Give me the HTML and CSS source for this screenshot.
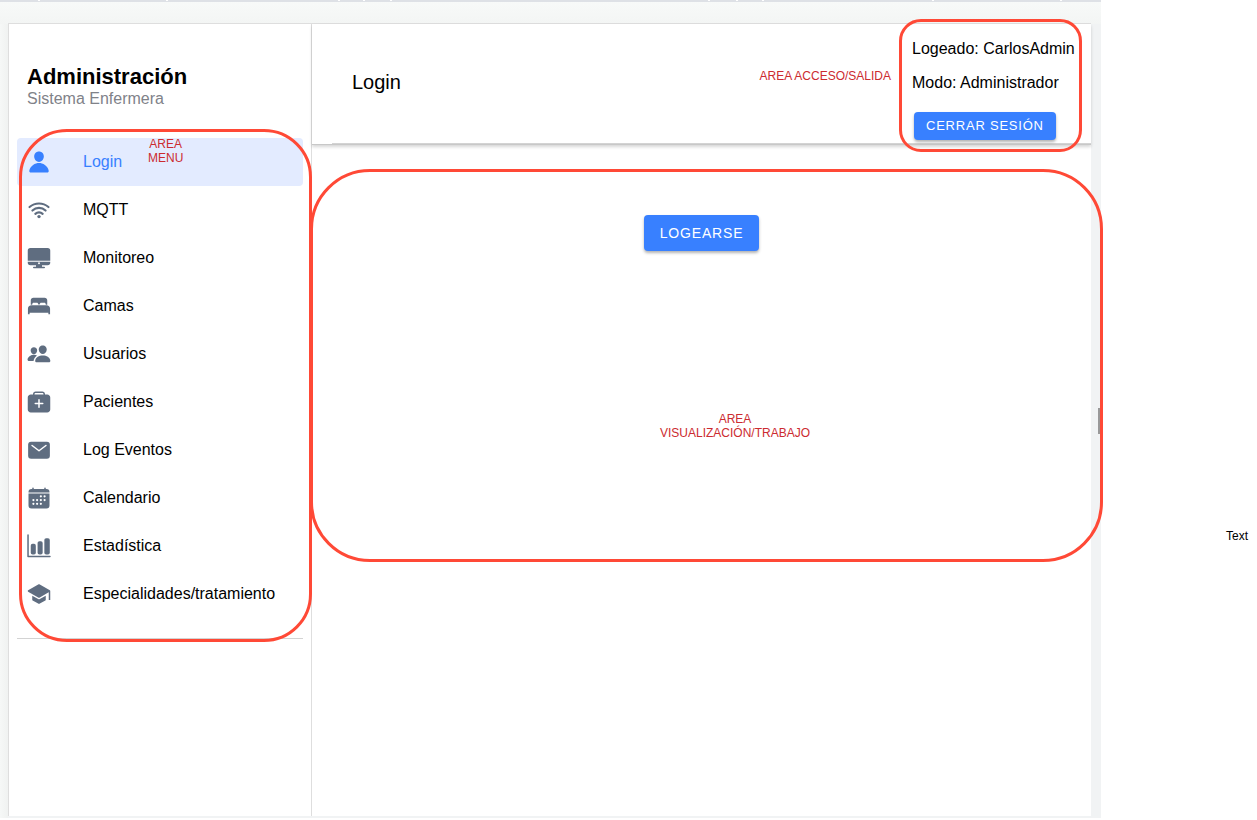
FILE: index.html
```html
<!DOCTYPE html>
<html lang="es">
<head>
<meta charset="utf-8">
<title>Administración - Sistema Enfermera</title>
<link rel="stylesheet" href="styles.css">
</head>
<body>
<div class="viewer">
  <div class="topbar"><i></i><i></i><i></i><i></i><i></i><i></i><i></i><i></i><i></i><i></i><i></i></div>
  <div class="frame">
    <aside class="sidebar">
      <header class="brand">
        <h1 class="brand-title">Administración</h1>
        <p class="brand-note">Sistema Enfermera</p>
      </header>
      <nav class="menu">
        <a class="item active" href="#"><svg class="icon" viewBox="0 0 512 512"><path d="M332 64c-19-21-46-32-76-32s-57 11-76 32-29 50-27 81c4 61 51 111 103 111s98-50 103-111c2-31-8-59-27-81zM432 480H80a31 31 0 0 1-24-11c-7-8-9-18-7-29 9-50 37-92 81-121 39-26 88-40 126-40s87 14 126 40c44 29 72 71 81 121 2 11 0 21-7 29a31 31 0 0 1-24 11z"/></svg>Login</a>
        <a class="item" href="#"><svg class="icon" viewBox="0 0 512 512"><g fill="none" stroke="currentColor" stroke-width="46" stroke-linecap="round"><path d="M54 193q88-76 202-76t202 76M116 268q60-56 140-56t140 56M178 338q34-32 78-32t78 32"/></g><circle cx="256" cy="397" r="36"/></svg>MQTT</a>
        <a class="item" href="#"><svg class="icon" viewBox="0 0 512 512"><path d="M16 336v16a56 56 0 0 0 56 56h120v32h-48a16 16 0 0 0 0 32h224a16 16 0 0 0 0-32h-48v-32h120a56 56 0 0 0 56-56v-16H16zm240 52a20 20 0 1 1 0-40 20 20 0 0 1 0 40zM496 312V96a56 56 0 0 0-56-56H72a56 56 0 0 0-56 56v216z"/></svg>Monitoreo</a>
        <a class="item" href="#"><svg class="icon" viewBox="0 0 512 512"><path d="M432 230V136c0-31-25-56-56-56H136c-31 0-56 25-56 56v94h32v-14c0-18 14-32 32-32h64c18 0 32 14 32 32v8h32v-8c0-18 14-32 32-32h64c18 0 32 14 32 32v14zM416 240H96c-44 0-76 32-76 72v120h36v-32h400v32h36V312c0-40-32-72-76-72z"/></svg>Camas</a>
        <a class="item" href="#"><svg class="icon" viewBox="0 0 512 512"><path d="M336 256c-21 0-41-9-57-26s-26-41-28-66 6-48 21-65 37-27 64-27 48 10 63 27c16 17 24 40 22 65-2 26-12 49-28 66s-36 26-57 26zM467 432H205c-10 0-19-5-25-13-6-7-8-17-5-27 7-31 27-56 55-75 29-19 64-29 106-29 43 0 80 9 107 28 28 19 47 45 54 76 2 10 0 20-6 27-6 8-14 13-24 13zM147 260c-35 0-66-33-69-73-1-21 5-39 18-53 12-13 31-20 51-20s39 7 52 21 19 32 17 52c-3 40-34 73-69 73zM213 286c-17-9-40-13-66-13-31 0-62 8-86 24-26 17-43 40-49 67-3 11 0 21 6 29s15 12 24 12h98c5-44 30-88 73-119z"/></svg>Usuarios</a>
        <a class="item" href="#"><svg class="icon" viewBox="0 0 512 512"><path fill-rule="evenodd" d="M432 96h-48v-8c0-31-25-56-56-56H184c-31 0-56 25-56 56v8H80c-35 0-64 29-64 64v256c0 35 29 64 64 64h352c35 0 64-29 64-64V160c0-35-29-64-64-64zm-272 0v-8c0-13 11-24 24-24h144c13 0 24 11 24 24v8z"/><path d="M256 208v160M176 288h160" fill="none" stroke="#fff" stroke-width="32" stroke-linecap="round"/></svg>Pacientes</a>
        <a class="item" href="#"><svg class="icon" viewBox="0 0 512 512"><rect x="24" y="80" width="464" height="360" rx="64"/><path d="M108 160l148 112 148-112" fill="none" stroke="#fff" stroke-width="32" stroke-linecap="round" stroke-linejoin="round"/></svg>Log Eventos</a>
        <a class="item" href="#"><svg class="icon" viewBox="0 0 512 512"><path d="M480 128a64 64 0 0 0-64-64h-16V48a16 16 0 0 0-32 0v16H144V48a16 16 0 0 0-32 0v16H96a64 64 0 0 0-64 64v12h448zM32 160v256a64 64 0 0 0 64 64h320a64 64 0 0 0 64-64V160z"/><path d="M136 300h1m78 0h1m79 0h1m79 0h1M136 380h1m78 0h1m79 0h1M295 220h1m79 0h1" fill="none" stroke="#fff" stroke-width="46" stroke-linecap="round"/></svg>Calendario</a>
        <a class="item" href="#"><svg class="icon" viewBox="0 0 512 512"><path d="M22 22v456h468" fill="none" stroke="currentColor" stroke-width="32" stroke-linecap="round" stroke-linejoin="round"/><rect x="80" y="210" width="108" height="226" rx="38"/><rect x="226" y="156" width="108" height="280" rx="38"/><rect x="370" y="90" width="116" height="346" rx="38"/></svg>Estadística</a>
        <a class="item" href="#"><svg class="icon" viewBox="0 0 512 512"><path d="M256 370c-3 0-6-1-8-2L112 292v88c0 6 3 11 8 14l128 72c5 3 11 3 16 0l128-72c5-3 8-8 8-14v-88l-136 76c-2 1-5 2-8 2zM495 188c-1-5-4-8-8-11L264 50c-5-3-11-3-16 0L24 178c-11 6-11 22 0 28l224 128c5 3 11 3 16 0l198-113c1-1 2 0 2 1v162h32V192z"/></svg>Especialidades/tratamiento</a>
        <div class="outline outline-menu"></div>
        <span class="note note-menu">AREA<br>MENU</span>
      </nav>
    </aside>
    <main class="page">
      <header class="header">
        <h2 class="page-title">Login</h2>
        <span class="note">AREA ACCESO/SALIDA</span>
        <section class="session">
          <p class="session-line">Logeado: CarlosAdmin</p>
          <p class="session-line">Modo: Administrador</p>
          <button class="button small" type="button">CERRAR SESIÓN</button>
        </section>
      </header>
      <section class="work">
        <button class="button" type="button">LOGEARSE</button>
        <span class="note">AREA<br>VISUALIZACIÓN/TRABAJO</span>
        <div class="handle"></div>
        <div class="outline outline-work"></div>
      </section>
    </main>
  </div>
</div>
<div class="side-label">Text</div>
</body>
</html>
```
FILE: styles.css
```css
* {
  box-sizing: border-box;
}

body {
  margin: 0;
  display: flex;
  min-height: 100vh;
  background: #fff;
  color: #000;
  font-family: "Liberation Sans", Arial, sans-serif;
  font-size: 16px;
}

h1, h2, p {
  margin: 0;
}

.viewer {
  flex: 1;
  display: flex;
  flex-direction: column;
  margin-bottom: 2px;
  padding: 0 10px 2px 8px;
  background:
    linear-gradient(#f8faf9, #f3f5f4) 0 0 / 100% 24px no-repeat,
    linear-gradient(90deg, #f6f8f7, #f0f2f1) 0 0 / 8px 100% no-repeat,
    #f1f3f4;
}

.topbar {
  display: grid;
  grid-template-columns: 38fr 128fr 172fr 25fr 27fr 318fr 28fr 26fr 170fr 128fr 41fr;
  height: 2px;
  margin: 0 -10px 21px -8px;
  background: #dee1e6;
}

.topbar i {
  height: 1px;
  border-left: 2px solid #fff;
}

.topbar i:first-child {
  border-left: 0;
}

.frame {
  flex: 1;
  display: flex;
  border-top: 1px solid #dedede;
  border-left: 1px solid #dedede;
  background: #fff;
}

.sidebar {
  flex: none;
  width: 303px;
  padding: 40px 8px 0;
  border-right: 1px solid #dedede;
}

.brand {
  height: 74px;
  padding-left: 10px;
}

.brand-title {
  font-size: 22px;
  line-height: 26px;
}

.brand-note {
  color: #808289;
  line-height: 18px;
}

.menu {
  position: relative;
  padding-bottom: 20px;
  border-bottom: 1px solid #d3d3d3;
}

.item {
  display: flex;
  align-items: center;
  gap: 32px;
  height: 48px;
  padding: 0 10px;
  border-radius: 4px;
  color: #000;
  text-decoration: none;
}

.icon {
  width: 24px;
  height: 24px;
  color: #5f6d80;
  fill: currentColor;
}

.active,
.active .icon {
  color: #3880ff;
}

.active {
  background: #e3ebff;
}

.note {
  color: #cc2b30;
  font-size: 12px;
  line-height: 14px;
  text-align: center;
}

.note-menu {
  position: absolute;
  top: -1px;
  left: 131px;
}

.outline,
.session {
  border: 3px solid #ff4936;
}

.outline {
  position: absolute;
  pointer-events: none;
}

.outline-menu {
  inset: -9px -9px -4px 2px;
  border-radius: 48px;
}

.page {
  flex: 1;
  display: flex;
  flex-direction: column;
}

.header {
  display: flex;
  align-items: center;
  height: 121px;
  padding: 0 9px 0 40px;
  border-bottom: 1px solid #c8c8c8;
  background: linear-gradient(#d3d3d3, #d3d3d3) 20px 100% / 100% 1px no-repeat;
  box-shadow: 0 2px 3px rgba(0, 0, 0, 0.16);
}

.page-title {
  flex: 1;
  padding-bottom: 4px;
  font-size: 20px;
  font-weight: 400;
}

.header .note {
  margin: 0 8px 16px 0;
}

.session {
  z-index: 1;
  width: 183px;
  height: 133px;
  margin-top: 2px;
  padding: 10px 0 0 10px;
  border-radius: 22px;
  white-space: nowrap;
}

.session-line {
  line-height: 34px;
}

.button {
  height: 36px;
  padding: 0 16px;
  border: 0;
  border-radius: 4px;
  background: #3880ff;
  box-shadow: 0 2px 3px rgba(0, 0, 0, 0.3);
  color: #fff;
  font-family: inherit;
  font-size: 14px;
  letter-spacing: 0.06em;
}

.small {
  height: 28px;
  margin: 12px 0 0 2px;
  padding: 0 12px;
  font-size: 13px;
}

.work {
  position: relative;
  display: flex;
  flex-direction: column;
  align-items: center;
  gap: 161px;
  padding-top: 70px;
}

.work .note {
  margin-left: 67px;
}

.outline-work {
  top: 24px;
  right: -12px;
  left: -2px;
  height: 393px;
  border-radius: 60px;
}

.handle {
  position: absolute;
  top: 263px;
  right: -9px;
  width: 2px;
  height: 26px;
  background: #999;
}

.side-label {
  flex: none;
  width: 156px;
  padding: 529px 9px 0 0;
  font-size: 12px;
  line-height: 14px;
  text-align: right;
}
```
